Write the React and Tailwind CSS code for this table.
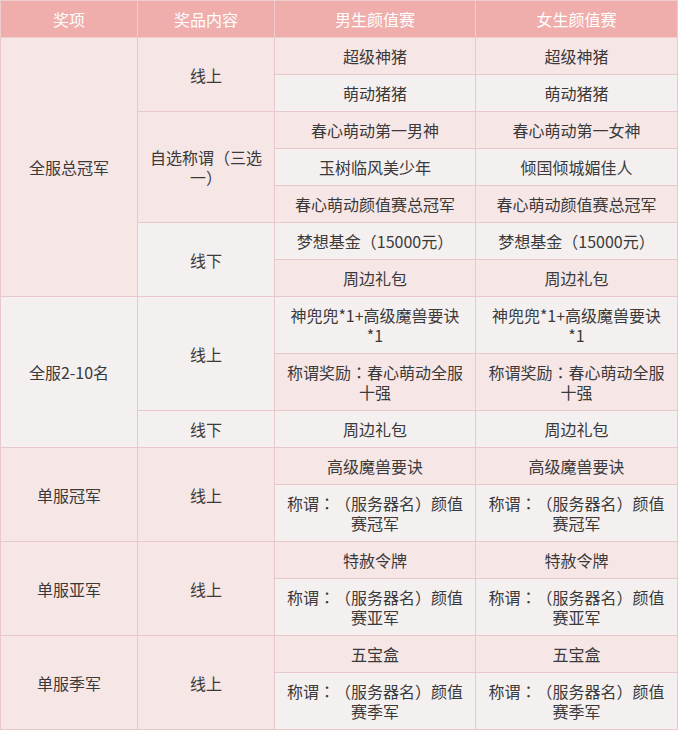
import React from "react";

// 冒号在简体字体里靠左，参考图是居中的
const fmt = (s) =>
  s.split(/(：)/).map((part, k) =>
    part === "：" ? (
      <span key={k} className="font-['Noto_Sans_CJK_TC',sans-serif]">
        ：
      </span>
    ) : (
      part
    )
  );

const Cell = ({ children, rowSpan }) => (
  <td
    rowSpan={rowSpan}
    className="border border-[#e8c8ca] px-[10px] py-2 text-center align-middle leading-5"
  >
    {fmt(children)}
  </td>
);

const rows = [
  [["全服总冠军", 7], ["线上", 2], "超级神猪", "超级神猪"],
  ["萌动猪猪", "萌动猪猪"],
  [["自选称谓（三选一）", 3], "春心萌动第一男神", "春心萌动第一女神"],
  ["玉树临风美少年", "倾国倾城媚佳人"],
  ["春心萌动颜值赛总冠军", "春心萌动颜值赛总冠军"],
  [["线下", 2], "梦想基金（15000元）", "梦想基金（15000元）"],
  ["周边礼包", "周边礼包"],
  [["全服2-10名", 3], ["线上", 2], "神兜兜*1+高级魔兽要诀*1", "神兜兜*1+高级魔兽要诀*1"],
  ["称谓奖励：春心萌动全服十强", "称谓奖励：春心萌动全服十强"],
  [["线下", 1], "周边礼包", "周边礼包"],
  [["单服冠军", 2], ["线上", 2], "高级魔兽要诀", "高级魔兽要诀"],
  ["称谓：（服务器名）颜值赛冠军", "称谓：（服务器名）颜值赛冠军"],
  [["单服亚军", 2], ["线上", 2], "特赦令牌", "特赦令牌"],
  ["称谓：（服务器名）颜值赛亚军", "称谓：（服务器名）颜值赛亚军"],
  [["单服季军", 2], ["线上", 2], "五宝盒", "五宝盒"],
  ["称谓：（服务器名）颜值赛季军", "称谓：（服务器名）颜值赛季军"],
];

export default function App() {
  return (
    <div className="bg-white w-[680px] h-[732px] font-['Noto_Sans_CJK_SC','Noto_Sans',sans-serif] text-[16px] text-[#3a3a3a] [text-spacing-trim:space-all]">
      <table className="w-[677px] table-fixed border-collapse">
        <colgroup>
          <col className="w-[137px]" />
          <col className="w-[137px]" />
          <col className="w-[201px]" />
          <col className="w-[202px]" />
        </colgroup>
        <thead>
          <tr className="bg-[#efadab] text-white">
            {["奖项", "奖品内容", "男生颜值赛", "女生颜值赛"].map((h) => (
              <th
                key={h}
                className="border border-[#f1cccc] py-2 font-normal leading-5"
              >
                {h}
              </th>
            ))}
          </tr>
        </thead>
        <tbody>
          {rows.map((row, i) => (
            <tr
              key={i}
              className={i % 2 === 0 ? "bg-[#f7e6e6]" : "bg-[#f5f0f0]"}
            >
              {row.map((c, j) =>
                Array.isArray(c) ? (
                  <Cell key={j} rowSpan={c[1]}>
                    {c[0]}
                  </Cell>
                ) : (
                  <Cell key={j}>{c}</Cell>
                )
              )}
            </tr>
          ))}
        </tbody>
      </table>
    </div>
  );
}
